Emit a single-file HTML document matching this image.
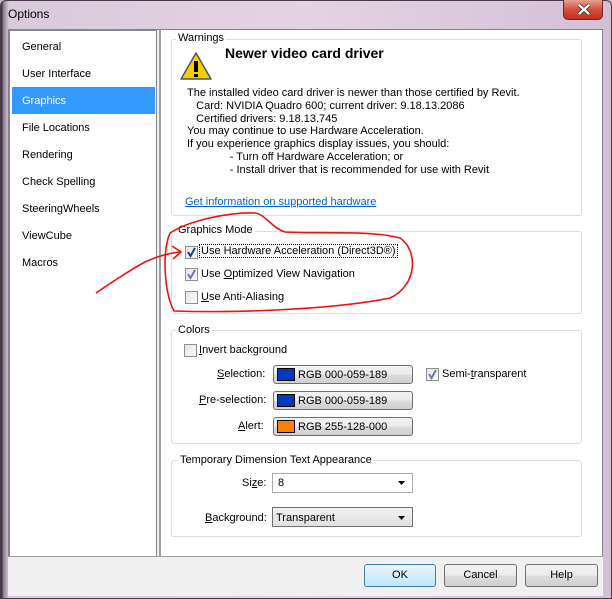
<!DOCTYPE html>
<html><head><meta charset="utf-8"><style>
*{box-sizing:border-box;margin:0;padding:0}
body{width:612px;height:599px;overflow:hidden;background:#c9b6cc;font-family:"Liberation Sans",sans-serif;font-size:11px;color:#000;position:relative}
.a{position:absolute;white-space:nowrap}
.frame{position:absolute;left:0;top:0;width:612px;height:599px;background:linear-gradient(90deg,#2a2a2a 0,#9a8a9c 3px,#d9c9dc 8px,#e3d3e4 50%,#d4c0d6 100%);border:1px solid #4a3a4c;border-radius:6px 6px 0 0}
.client{position:absolute;left:8px;top:29px;width:595px;height:567px;background:#f0f0f0;border:1px solid #8a7f8c}
.list{position:absolute;left:9px;top:30px;width:148px;height:527px;background:#fff;border:1px solid #828790}
.panel{position:absolute;left:159px;top:30px;width:443px;height:527px;background:#fff;border-left:2px solid #a0a0a0}
.li{position:absolute;left:12px;font-size:11px}
.sel{position:absolute;left:2px;top:56px;width:143px;height:27px;background:#3399ff}
.grp{position:absolute;border:1px solid #d5dfe5;border-radius:3px}
.gl{position:absolute;background:#fff;padding:0 2px;font-size:11px}
.cb{position:absolute;width:13px;height:13px;border:1px solid #8f8f8f;background:linear-gradient(135deg,#e6e6e6,#fafafa)}
.btn{position:absolute;height:19px;border:1px solid #707070;border-radius:3px;background:linear-gradient(#f2f2f2 0,#ebebeb 50%,#dddddd 51%,#cfcfcf 100%)}
.sw{position:absolute;left:3px;top:2px;width:18px;height:13px;border:1px solid #000}
.combo{position:absolute;height:20px;border:1px solid #abadb3;background:#fff}
.dbtn{position:absolute;height:23px;border:1px solid #707070;border-radius:3px;background:linear-gradient(#f2f2f2 0,#ebebeb 50%,#dddddd 51%,#cfcfcf 100%);text-align:center;line-height:21px}
u{text-decoration:underline}
</style></head><body>
<div class="frame"></div>
<div class="a" style="left:8px;top:7px;font-size:12px">Options</div>
<div class="a" style="left:563px;top:0;width:40px;height:20px;border:1px solid #6b2a20;border-top:none;border-radius:0 0 5px 5px;background:linear-gradient(#e8a090 0,#d0503c 50%,#c03020 100%)">
<svg width="40" height="20" style="position:absolute;left:0;top:0"><path d="M15 5 L25 14 M25 5 L15 14" stroke="#333" stroke-width="4"/><path d="M15 5 L25 14 M25 5 L15 14" stroke="#fff" stroke-width="2.4"/></svg></div>
<div class="client"></div>
<div class="list">
<div class="sel"></div>
<div class="li" style="top:10px">General</div>
<div class="li" style="top:37px">User Interface</div>
<div class="li" style="top:64px;color:#fff">Graphics</div>
<div class="li" style="top:91px">File Locations</div>
<div class="li" style="top:118px">Rendering</div>
<div class="li" style="top:145px">Check Spelling</div>
<div class="li" style="top:172px">SteeringWheels</div>
<div class="li" style="top:199px">ViewCube</div>
<div class="li" style="top:226px">Macros</div>
</div>
<div class="panel"></div>
<div style="position:absolute;left:8px;top:556px;width:595px;height:40px;background:#f0f0f0;border-top:1px solid #a0a0a0"></div>

<div class="grp" style="left:171px;top:39px;width:411px;height:177px"></div>
<div class="gl" style="left:176px;top:32px">Warnings</div>
<svg class="a" style="left:179px;top:51px" width="34" height="30"><path d="M17 2 L32 28 L2 28 Z" fill="#f5d000" stroke="#555" stroke-width="1.5" stroke-linejoin="round"/><rect x="15" y="10" width="4" height="11" fill="#000"/><rect x="15" y="23" width="4" height="3" fill="#000"/></svg>
<div class="a" style="left:225px;top:45px;font-size:14px;font-weight:bold">Newer video card driver</div>
<div class="a" style="left:187px;top:87px;line-height:12.8px">The installed video card driver is newer than those certified by Revit.<br>&nbsp;&nbsp; Card: NVIDIA Quadro 600; current driver: 9.18.13.2086<br>&nbsp;&nbsp; Certified drivers: 9.18.13.745<br>You may continue to use Hardware Acceleration.<br>If you experience graphics display issues, you should:<br>&nbsp;&nbsp;&nbsp;&nbsp;&nbsp;&nbsp;&nbsp;&nbsp;&nbsp;&nbsp;&nbsp;&nbsp;&nbsp; - Turn off Hardware Acceleration; or<br>&nbsp;&nbsp;&nbsp;&nbsp;&nbsp;&nbsp;&nbsp;&nbsp;&nbsp;&nbsp;&nbsp;&nbsp;&nbsp; - Install driver that is recommended for use with Revit</div>
<div class="a" style="left:185px;top:196px;color:#0066cc;text-decoration:underline">Get information on supported hardware</div>

<div class="grp" style="left:171px;top:231px;width:411px;height:83px"></div>
<div class="gl" style="left:176px;top:224px">Graphics Mode</div>
<div class="cb" style="left:185px;top:246px"></div>
<div class="cb" style="left:185px;top:268px"></div>
<div class="cb" style="left:185px;top:291px"></div>
<svg class="a" style="left:185px;top:246px" width="13" height="40"><path d="M3 6 L5.5 10 L10 2" stroke="#1c3f94" stroke-width="2" fill="none"/><path d="M3 28 L5.5 32 L10 24" stroke="#6a7ba8" stroke-width="2" fill="none"/></svg>
<div class="a" style="left:200px;top:245px;outline:1px dotted #000;padding:0 1px">Use Hardware Acceleration (Direct3D®)</div>
<div class="a" style="left:201px;top:268px">Use <u>O</u>ptimized View Navigation</div>
<div class="a" style="left:201px;top:291px"><u>U</u>se Anti-Aliasing</div>

<div class="grp" style="left:171px;top:330px;width:411px;height:114px"></div>
<div class="gl" style="left:176px;top:324px">Colors</div>
<div class="cb" style="left:184px;top:344px"></div>
<div class="a" style="left:199px;top:344px"><u>I</u>nvert background</div>
<div class="a" style="left:217px;top:368px"><u>S</u>election:</div>
<div class="a" style="left:199px;top:394px"><u>P</u>re-selection:</div>
<div class="a" style="left:238px;top:420px"><u>A</u>lert:</div>
<div class="btn" style="left:273px;top:365px;width:140px"><div class="sw" style="background:#003bbd"></div><div class="a" style="left:24px;top:3px">RGB 000-059-189</div></div>
<div class="btn" style="left:273px;top:391px;width:140px"><div class="sw" style="background:#003bbd"></div><div class="a" style="left:24px;top:3px">RGB 000-059-189</div></div>
<div class="btn" style="left:273px;top:417px;width:140px"><div class="sw" style="background:#ff8000"></div><div class="a" style="left:24px;top:3px">RGB 255-128-000</div></div>
<div class="cb" style="left:426px;top:368px"></div>
<svg class="a" style="left:426px;top:368px" width="13" height="13"><path d="M3 6 L5.5 10 L10 2" stroke="#6a7ba8" stroke-width="2" fill="none"/></svg>
<div class="a" style="left:442px;top:368px">Semi-<u>t</u>ransparent</div>

<div class="grp" style="left:171px;top:460px;width:411px;height:77px"></div>
<div class="gl" style="left:178px;top:454px">Temporary Dimension Text Appearance</div>
<div class="a" style="left:242px;top:477px">Si<u>z</u>e:</div>
<div class="combo" style="left:272px;top:473px;width:141px"><div class="a" style="left:5px;top:3px">8</div></div>
<div class="a" style="left:205px;top:512px"><u>B</u>ackground:</div>
<div class="combo" style="left:272px;top:507px;width:141px;border-color:#707070;background:linear-gradient(#f2f2f2,#e0e0e0)"><div class="a" style="left:3px;top:4px">Transparent</div></div>
<svg class="a" style="left:398px;top:481px" width="8" height="40"><path d="M0 0 L7 0 L3.5 4 Z M0 35 L7 35 L3.5 39 Z" fill="#000"/></svg>

<div class="dbtn" style="left:364px;top:564px;width:72px;border-color:#3c7fb1;background:linear-gradient(#eaf6fd,#bee6fd)">OK</div>
<div class="dbtn" style="left:444px;top:564px;width:73px">Cancel</div>
<div class="dbtn" style="left:525px;top:564px;width:73px">Help</div>

<svg class="a" style="left:0;top:0" width="612" height="599">
<path d="M255 213 C230 212 190 220 170 233 C162 252 164 292 174 311 C230 313 330 310 390 298 C418 285 418 250 400 238 C370 230 320 234 285 232 C272 228 265 214 255 213" stroke="#f01010" stroke-width="1.6" fill="none"/>
<path d="M96 293 C115 280 130 270 145 262 C158 256 170 253 180 252" stroke="#f01010" stroke-width="1.6" fill="none"/>
<path d="M172 246 L181 252 L173 259" stroke="#f01010" stroke-width="1.6" fill="none"/>
</svg>
</body></html>
